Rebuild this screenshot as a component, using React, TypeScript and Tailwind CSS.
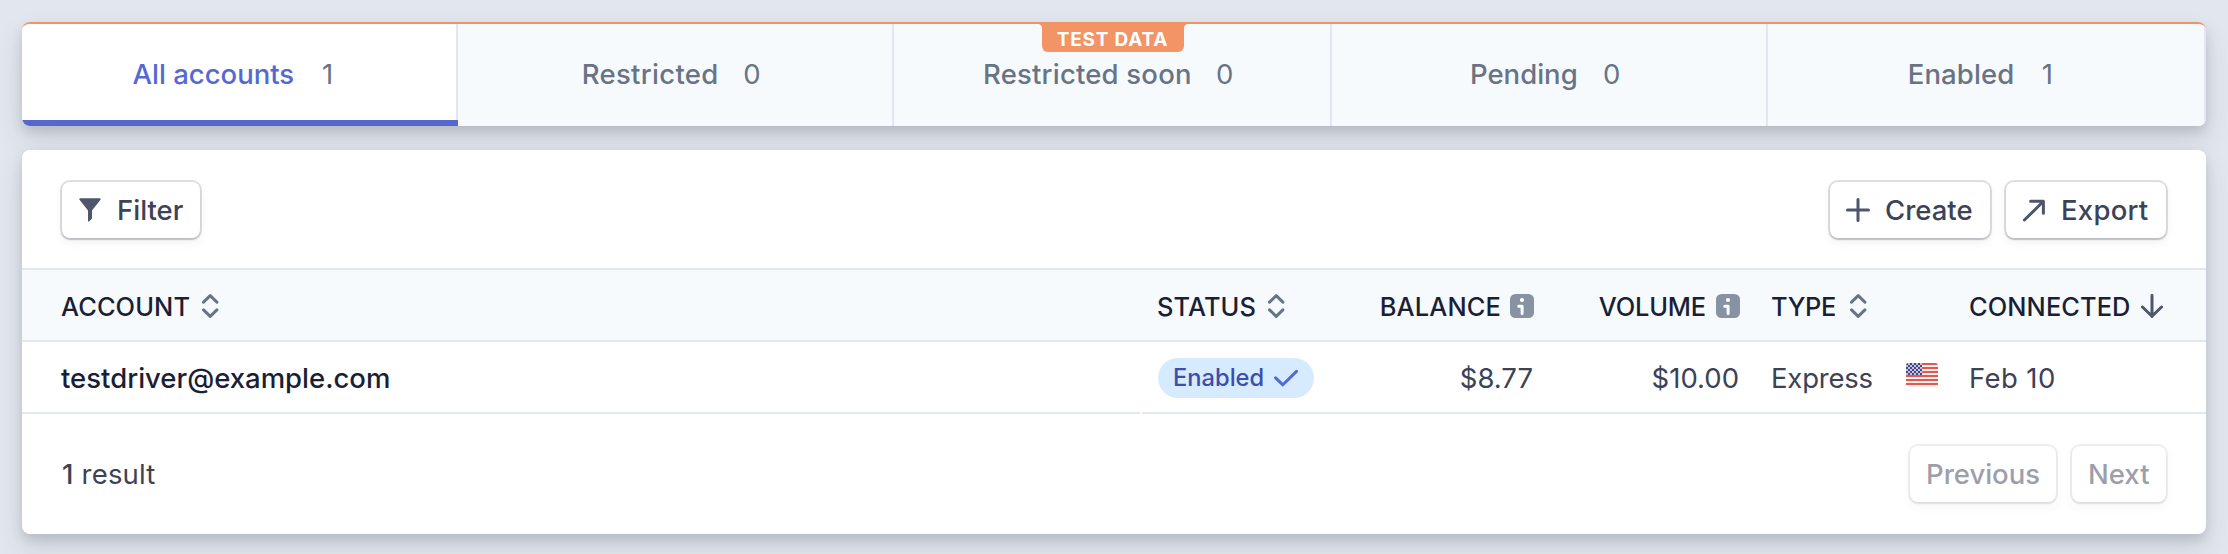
import React from "react";

const tabs = [
  { label: "All accounts", count: 1, active: true, width: "w-[160px]", tracking: "tracking-normal", pad: "pl-[29.5px] w-[53px]" },
  { label: "Restricted", count: 0, width: "w-[136.5px]", tracking: "tracking-[0.3px]", pad: "pl-[25px] w-[50px]" },
  { label: "Restricted soon", count: 0, width: "w-[208px]", tracking: "tracking-[0.2px]", pad: "pl-[25px] w-[50px]" },
  { label: "Pending", count: 0, width: "w-[108px]", tracking: "tracking-normal", pad: "pl-[25px] w-[50px]" },
  { label: "Enabled", count: 1, width: "w-[106.5px]", tracking: "tracking-[0.12px]", pad: "pl-[27.5px] w-[50px]" },
];

const iconProps = {
  width: 24,
  height: 24,
  viewBox: "0 0 24 24",
  fill: "none",
  strokeLinecap: "round" as const,
  strokeLinejoin: "round" as const,
  className: "shrink-0",
};

function FilterIcon() {
  return (
    <svg {...iconProps}>
      <path d="M2.3 0.3h19.4c.9 0 1.3.8.8 1.5L14 12.6v7.6c0 .3-.1.6-.4.8L11 23.4c-.4.3-1 .1-1-.5V12.6L1.5 1.8C1 1.1 1.4.3 2.3.3z" fill="#4f566b" />
    </svg>
  );
}

function PlusIcon() {
  return (
    <svg {...iconProps} stroke="#4f566b" strokeWidth="3">
      <path d="M12 1.5v21M1.5 12h21" />
    </svg>
  );
}

function ExportIcon() {
  return (
    <svg {...iconProps} stroke="#4f566b" strokeWidth="3">
      <path d="M8.6 3.3h12.8v11.9M21.2 3.5L2.4 22" />
    </svg>
  );
}

function SortIcon() {
  return (
    <svg {...iconProps} stroke="#697386" strokeWidth="3">
      <path d="M5.5 8.2L12.2 1.7L18.9 8.2M5.5 15.8L12.2 22.3L18.9 15.8" />
    </svg>
  );
}

function ArrowDownIcon() {
  return (
    <svg {...iconProps} stroke="#4f566b" strokeWidth="3">
      <path d="M12 1.4v21M2.5 13L12 22.3L21.5 13" />
    </svg>
  );
}

function InfoIcon() {
  return (
    <svg {...iconProps}>
      <rect width="24" height="24" rx="5.5" fill="#8792a2" />
      <circle cx="12" cy="6" r="2.1" fill="#fff" />
      <path d="M8.7 12.2h3.4v7.4" stroke="#fff" strokeWidth="3" />
    </svg>
  );
}

function CheckIcon() {
  return (
    <svg {...iconProps} stroke="#5469d4" strokeWidth="3">
      <path d="M1.6 11.8L8.9 18.8L22.5 5.4" />
    </svg>
  );
}

function FlagIcon() {
  const stripes = [0, 4, 8, 12, 16, 20];
  const cells: [number, number][] = [];
  for (let r = 0; r < 6; r++) for (let c = 0; c < 8; c++) if ((r + c) % 2 === 1) cells.push([c * 2, r * 2]);
  return (
    <svg width="32" height="24" viewBox="0 0 32 24" className="-mt-1.5 block overflow-hidden rounded-[3px]">
      <rect width="32" height="24" fill="#fbeeee" />
      {stripes.map((y) => (
        <rect key={y} y={y} width="32" height="2" fill="#e25950" />
      ))}
      <rect width="16" height="12" fill="#43458b" />
      {cells.map(([x, y]) => (
        <rect key={`${x}-${y}`} x={x} y={y} width="2" height="2" fill="#c3c4dd" />
      ))}
    </svg>
  );
}

function Button({ children, className }: { children: React.ReactNode; className: string }) {
  return (
    <button
      className={`flex h-14 items-center gap-[15px] whitespace-nowrap rounded-lg bg-white pl-4 font-medium text-[#3c4257] shadow-[0_0_0_2px_rgba(60,66,87,0.16),0_2px_2px_0_rgba(0,0,0,0.12),0_4px_10px_0_rgba(60,66,87,0.08)] ${className}`}
    >
      {children}
    </button>
  );
}

const cardShadow = "shadow-[0_14px_28px_0_rgba(60,76,87,0.12),0_6px_12px_0_rgba(0,8,0,0.13)]";
const grid = "grid grid-cols-[1120px_200px_208px_206px_134px_64px_252px]";

export default function App() {
  return (
    <div className="flex h-[554px] w-[2228px] flex-col gap-6 overflow-hidden bg-[#e2e6ee] px-[22px] pt-[22px] font-['Inter',sans-serif] text-[27.5px] leading-[34px] text-[#3c4257]">
      <nav className={`relative h-[104px] shrink-0 rounded-lg bg-[#f7fafc] ${cardShadow}`}>
        <div className="grid h-full grid-cols-[436px_436px_438px_436px_438px] overflow-hidden rounded-lg border-t-2 border-[#f29466]">
          {tabs.map((tab) => (
            <div
              key={tab.label}
              className={`relative flex items-center justify-center whitespace-nowrap border-r-2 border-[#e3e7ef] pb-0.5 text-[#697386] ${tab.active ? "bg-white" : "bg-[#f6fafd]"}`}
            >
              <span className={`font-medium ${tab.width} ${tab.tracking} ${tab.active ? "text-[#5469d4]" : ""}`}>{tab.label}</span>
              <span className={tab.pad}>{tab.count}</span>
              {tab.active && <span className="absolute -right-0.5 bottom-0 left-0 h-1.5 bg-[#5668d0]" />}
            </div>
          ))}
        </div>
        <div className="absolute left-[1020px] top-[2px] flex h-7 w-[142px] justify-center rounded-b-md bg-[#f29466] pr-px text-[19px] font-bold leading-[32px] tracking-[0.8px] text-white">
          <svg className="absolute -left-1 top-0" width="4" height="4" viewBox="0 0 4 4">
            <path d="M0 0h4v4C4 1.8 2.2 0 0 0z" fill="#f29466" />
          </svg>
          TEST DATA
          <svg className="absolute -right-1 top-0" width="4" height="4" viewBox="0 0 4 4">
            <path d="M4 0H0v4C0 1.8 1.8 0 4 0z" fill="#f29466" />
          </svg>
        </div>
      </nav>

      <main className={`relative h-[384px] shrink-0 rounded-lg bg-white ${cardShadow}`}>
        <div className="flex h-[118px] gap-4 px-10 pt-8">
          <Button className="mr-auto w-[138px]">
            <FilterIcon />
            Filter
          </Button>
          <Button className="w-[160px]">
            <PlusIcon />
            Create
          </Button>
          <Button className="w-[160px]">
            <ExportIcon />
            <span className="tracking-[0.25px]">Export</span>
          </Button>
        </div>

        <div className={`${grid} h-[74px] items-center whitespace-nowrap border-y-2 border-[#e3e8ee] bg-[#f6fafd] pt-0.5 text-[25.4px] font-medium text-[#1a1f36]`}>
          <div className="flex items-center gap-2 pl-[39px]">
            <span className="w-[129px] pt-0.5 tracking-[0.1px]">ACCOUNT</span>
            <SortIcon />
          </div>
          <div className="flex items-center gap-2 pl-[15px]">
            <span className="w-[99px] pt-0.5 tracking-[0.1px]">STATUS</span>
            <SortIcon />
          </div>
          <div className="flex items-center justify-end gap-[9px] pr-4">
            <span className="pt-0.5 tracking-[0.15px]">BALANCE</span>
            <InfoIcon />
          </div>
          <div className="flex items-center justify-end gap-2.5 pr-4">
            <span className="pt-0.5 tracking-[-0.15px]">VOLUME</span>
            <InfoIcon />
          </div>
          <div className="flex items-center gap-2 pl-[15px]">
            <span className="w-[67px] pt-0.5 tracking-[-0.3px]">TYPE</span>
            <SortIcon />
          </div>
          <div />
          <div className="flex items-center gap-2 pl-[15px]">
            <span className="w-[163px] pt-0.5 tracking-[0.1px]">CONNECTED</span>
            <ArrowDownIcon />
          </div>
        </div>

        <div className={`${grid} h-[72px] whitespace-nowrap`}>
          <div className="mr-0.5 flex items-center border-b-2 border-[#e3e8ee] pl-[39px] pt-0.5 font-medium text-[#1a1f36]">testdriver@example.com</div>
          <div className="flex items-center border-b-2 border-[#e3e8ee] pl-4 pt-0.5">
            <span className="flex h-10 w-[156px] items-center justify-between rounded-full bg-[#d6ebff] pl-[15px] pr-4 text-[23.7px] font-medium text-[#3d4eac]">
              <span className="-mt-px">Enabled</span>
              <CheckIcon />
            </span>
          </div>
          <div className="flex items-center justify-end border-b-2 border-[#e3e8ee] pr-[17px] pt-0.5">$8.77</div>
          <div className="flex items-center justify-end border-b-2 border-[#e3e8ee] pr-[17px] pt-0.5">$10.00</div>
          <div className="flex items-center border-b-2 border-[#e3e8ee] pl-[15px] pt-0.5 tracking-[-0.2px]">Express</div>
          <div className="flex items-center border-b-2 border-[#e3e8ee] pl-4 pt-0.5">
            <FlagIcon />
          </div>
          <div className="flex items-center border-b-2 border-[#e3e8ee] pl-[15px] pt-0.5 tracking-[0.4px]">Feb 10</div>
        </div>

        <div className="flex h-[120px] gap-4 px-10 pt-8">
          <div className="mr-auto flex h-14 items-center tracking-[0.2px]">
            <span className="whitespace-pre"><span className="font-medium">1</span> result</span>
          </div>
          <Button className="w-[146px] opacity-50">Previous</Button>
          <Button className="w-[94px] opacity-50">Next</Button>
        </div>
      </main>
    </div>
  );
}
